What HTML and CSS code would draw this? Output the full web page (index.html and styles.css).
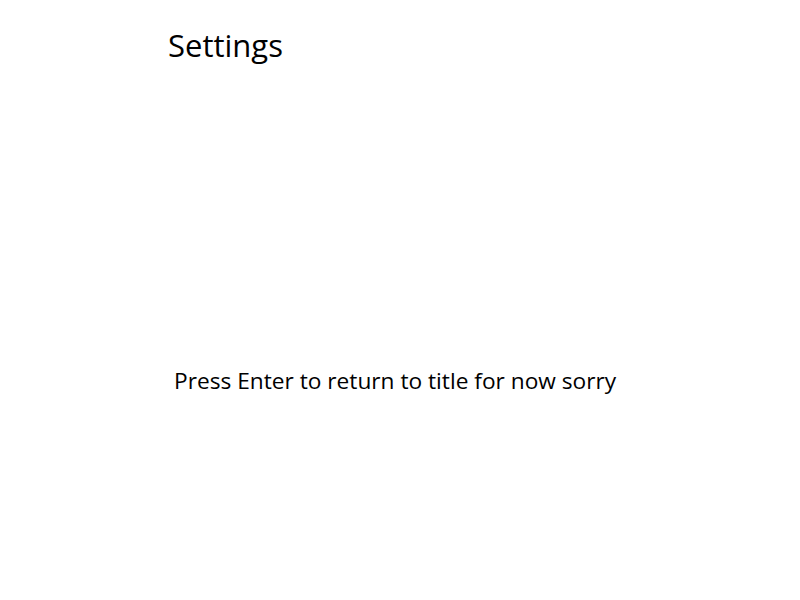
FILE: index.html
```html
<!DOCTYPE html>
<html>
<head>
<meta charset="utf-8">
<link rel="stylesheet" href="styles.css">
</head>
<body>
<div class="screen">
  <h1 class="title">Settings</h1>
  <p class="message">Press Enter to return to title for now sorry</p>
</div>
</body>
</html>
```
FILE: styles.css
```css
html, body {
  margin: 0;
  padding: 0;
  background: #ffffff;
}
.screen {
  width: 800px;
  height: 600px;
  display: flex;
  flex-direction: column;
  font-family: "Open Sans", "Noto Sans", sans-serif;
  color: #000;
}
.title {
  margin: 0;
  padding: 25px 0 0 168px;
  font-size: 31px;
  font-weight: 400;
  line-height: 40px;
}
.message {
  margin: 0;
  padding: 301px 0 0 174px;
  font-size: 22.7px;
  line-height: 30px;
}
```
